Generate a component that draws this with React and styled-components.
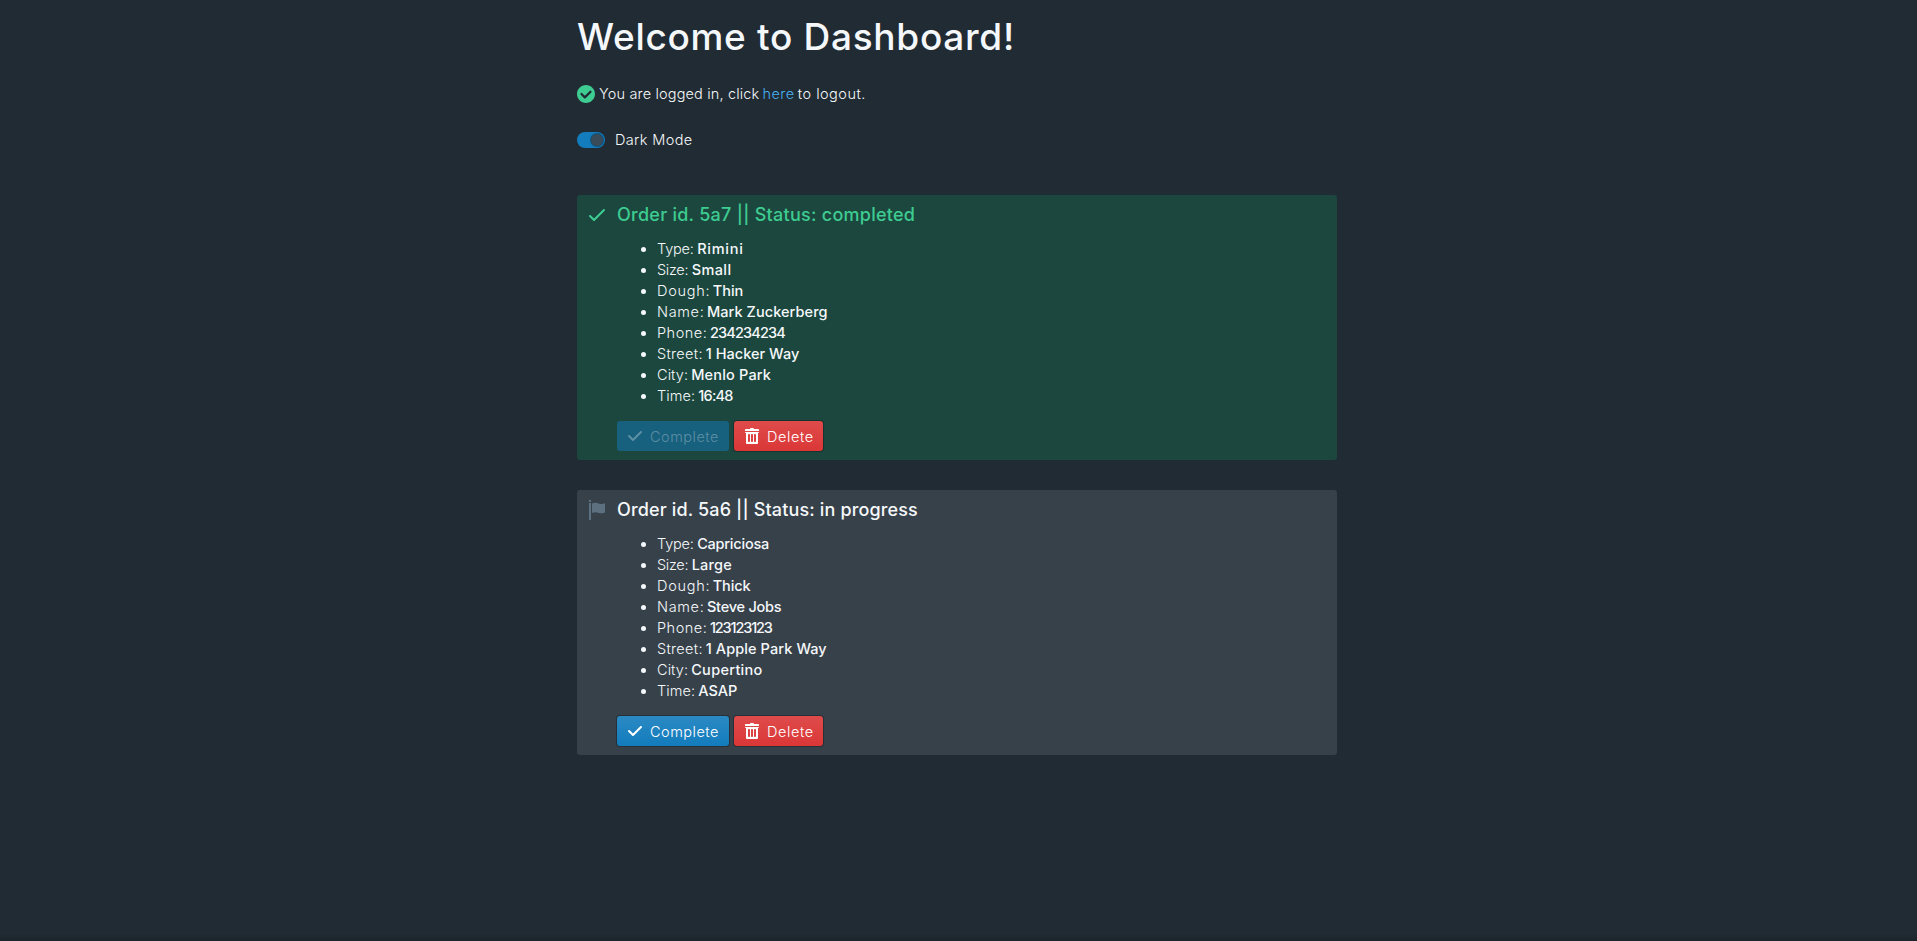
import React, { useState } from "react";
import styled, { createGlobalStyle, css } from "styled-components";

const GlobalStyle = createGlobalStyle`
  * { box-sizing: border-box; }
  body {
    margin: 0;
    background: #212b33;
    color: #f5f8fa;
    font-family: Inter, "Liberation Sans", sans-serif;
    font-size: 14.5px;
    font-weight: 300;
    line-height: 21px;
  }
`;

const Page = styled.div`
  display: flex;
  justify-content: center;
  min-height: 941px;
  padding: 17px 3px 0 0;
  background: linear-gradient(to top, rgba(0, 0, 0, 0.15), transparent 8px);
`;

const Content = styled.main`
  width: 760px;
`;

const Title = styled.h1`
  margin: 0 0 25px;
  font-size: 37px;
  line-height: 40px;
  font-weight: 500;
  letter-spacing: 0.7px;
`;

const Tracked = styled.span`
  letter-spacing: ${(p) => p.$track || 0}px;
`;

const LoginStatus = styled.p`
  display: flex;
  align-items: center;
  margin: 0 0 26px;
  height: 22px;
  white-space: pre;
`;

const StatusIcon = styled.svg`
  width: 18px;
  height: 18px;
  margin: 1px 4px 0 0;
  fill: #3dcc91;
`;

const LogoutLink = styled.a`
  color: #48aff0;
  text-decoration: none;
  letter-spacing: 0.5px;
  margin: 0 3px 0 3px;
`;

const SwitchLabel = styled.label`
  display: flex;
  align-items: center;
  gap: 10px;
  height: 20px;
  margin-bottom: 45px;
  cursor: pointer;
`;

const SwitchText = styled(Tracked)`
  padding-bottom: 1px;
`;

const SwitchTrack = styled.span`
  display: flex;
  justify-content: ${(p) => (p.$on ? "flex-end" : "flex-start")};
  width: 28px;
  height: 16px;
  padding: 2px;
  border-radius: 8px;
  background: ${(p) => (p.$on ? "#137cbd" : "#10161a80")};
`;

const SwitchKnob = styled.span`
  width: 12px;
  height: 12px;
  border-radius: 50%;
  background: #394b59;
  box-shadow: 0 0 0 1px rgba(16, 22, 26, 0.4);
`;

const HiddenInput = styled.input`
  display: none;
`;

const Callout = styled.section`
  display: flex;
  gap: 10px;
  height: 265px;
  margin-bottom: 30px;
  padding: 10px 12px 9px 10px;
  border-radius: 3px;
  background: ${(p) => (p.$done ? "#1c473e" : "#37414a")};
`;

const CalloutIcon = styled.svg`
  flex: none;
  width: 20px;
  height: 20px;
  fill: ${(p) => (p.$done ? "#3dcc91" : "#5c7080")};
`;

const CalloutTitle = styled.h4`
  margin: 0 0 13px;
  font-size: 18px;
  line-height: 20px;
  font-weight: 500;
  letter-spacing: ${(p) => p.$track}px;
  color: ${(p) => (p.$done ? "#3dcc91" : "#f5f8fa")};
`;

const Details = styled.ul`
  margin: 0 0 15px;
  padding-left: 40px;
`;

const Label = styled(Tracked)`
  margin-right: ${(p) => -0.9 - p.$track}px;
`;

const Value = styled.strong`
  font-weight: 500;
  letter-spacing: ${(p) => p.$track}px;
`;

const Actions = styled.div`
  display: flex;
  gap: 5px;
`;

const intents = {
  primary: css`
    background: #137cbd linear-gradient(to bottom, rgba(255, 255, 255, 0.1), rgba(255, 255, 255, 0));
  `,
  danger: css`
    background: #db3737 linear-gradient(to bottom, rgba(255, 255, 255, 0.1), rgba(255, 255, 255, 0));
  `,
};

const Button = styled.button`
  display: flex;
  align-items: center;
  gap: 7px;
  height: 30px;
  width: ${(p) => p.$width}px;
  padding: 0 10px;
  border: 0;
  border-radius: 3px;
  color: #fff;
  font: inherit;
  letter-spacing: ${(p) => p.$track}px;
  box-shadow: 0 0 0 1px rgba(16, 22, 26, 0.4);
  ${(p) => intents[p.$intent]}
  &:disabled {
    background: #17607e;
    box-shadow: none;
    color: rgba(255, 255, 255, 0.3);
  }
`;

const ButtonIcon = styled.svg`
  flex: none;
  width: 16px;
  height: 16px;
  fill: currentColor;
`;

const orders = [
  {
    id: "5a7",
    status: "completed",
    track: 0.26,
    rows: [
      ["Type:", -0.17, "Rimini", 0.75],
      ["Size:", -0.3, "Small", 0.4],
      ["Dough:", 0.72, "Thin", 0],
      ["Name:", 0.66, "Mark Zuckerberg", 0.07],
      ["Phone:", 0.5, "234234234", -0.84],
      ["Street:", 0.3, "1 Hacker Way", 0.04],
      ["City:", 0.07, "Menlo Park", 0.18],
      ["Time:", 0.1, "16:48", -0.8],
    ],
  },
  {
    id: "5a6",
    status: "in progress",
    track: 0.14,
    rows: [
      ["Type:", -0.17, "Capriciosa", -0.22],
      ["Size:", -0.3, "Large", 0.2],
      ["Dough:", 0.72, "Thick", -0.1],
      ["Name:", 0.66, "Steve Jobs", -0.23],
      ["Phone:", 0.5, "123123123", -1.15],
      ["Street:", 0.3, "1 Apple Park Way", 0.1],
      ["City:", 0.07, "Cupertino", 0.3],
      ["Time:", 0.1, "ASAP", -0.05],
    ],
  },
];

function Order({ order }) {
  const done = order.status === "completed";
  return (
    <Callout $done={done}>
      <CalloutIcon viewBox="0 0 20 20" $done={done}>
        {done ? (
          <path d="M17 4c-.28 0-.53.11-.71.29L7 13.59 3.71 10.29A.997.997 0 003 10a1.003 1.003 0 00-.71 1.71l4 4c.18.18.43.29.71.29s.53-.11.71-.29l10-10A1.003 1.003 0 0017 4z" />
        ) : (
          <path d="M2 0h2v2H2zM2 3h2v17H2zM5 3.5c3-1.3 5-.4 7.3.2 2 .5 3.7.4 5.7-.4v9.2c-2 .9-4 .9-6 .4-2.3-.6-4.3-1.3-7 0z" />
        )}
      </CalloutIcon>
      <div>
        <CalloutTitle $done={done} $track={order.track}>
          Order id. {order.id} || Status: {order.status}
        </CalloutTitle>
        <Details>
          {order.rows.map(([label, labelTrack, value, valueTrack]) => (
            <li key={label}>
              <Label $track={labelTrack}>{label}</Label> <Value $track={valueTrack}>{value}</Value>
            </li>
          ))}
        </Details>
        <Actions>
          <Button $intent="primary" $width={112} $track={0.5} disabled={done}>
            <ButtonIcon viewBox="0 0 16 16">
              <path d="M14 3c-.28 0-.53.11-.71.29L6 10.59l-3.29-3.3a1.003 1.003 0 00-1.42 1.42l4 4c.18.18.43.29.71.29s.53-.11.71-.29l8-8A1.003 1.003 0 0014 3z" />
            </ButtonIcon>
            Complete
          </Button>
          <Button $intent="danger" $width={89} $track={0.6}>
            <ButtonIcon viewBox="0 0 16 16">
              <path d="M14.49 3.99h-13c-.28 0-.5.22-.5.5s.22.5.5.5h.5v10c0 .55.45 1 1 1h10c.55 0 1-.45 1-1v-10h.5c.28 0 .5-.22.5-.5s-.22-.5-.5-.5zm-8.5 9c0 .55-.45 1-1 1s-1-.45-1-1v-6c0-.55.45-1 1-1s1 .45 1 1v6zm3 0c0 .55-.45 1-1 1s-1-.45-1-1v-6c0-.55.45-1 1-1s1 .45 1 1v6zm3 0c0 .55-.45 1-1 1s-1-.45-1-1v-6c0-.55.45-1 1-1s1 .45 1 1v6zm2-12h-4c0-.55-.45-1-1-1h-2c-.55 0-1 .45-1 1h-4c-.55 0-1 .45-1 1v1h14v-1c0-.55-.45-1-1-1z" />
            </ButtonIcon>
            Delete
          </Button>
        </Actions>
      </div>
    </Callout>
  );
}

export default function App() {
  const [dark, setDark] = useState(true);
  return (
    <Page>
      <GlobalStyle />
      <Content>
        <Title>Welcome to Dashboard!</Title>
        <LoginStatus>
          <StatusIcon viewBox="0 0 16 16">
            <path d="M8 0C3.58 0 0 3.58 0 8s3.58 8 8 8 8-3.58 8-8-3.58-8-8-8zm4.71 6.71l-5 5c-.18.18-.43.29-.71.29s-.53-.11-.71-.29l-3-3a1.003 1.003 0 011.42-1.42L7 9.59l4.29-4.29a1.003 1.003 0 011.42 1.42z" />
          </StatusIcon>
          <Tracked $track={0.16}>You are logged in, click</Tracked>
          <LogoutLink>here</LogoutLink>
          <Tracked $track={0.5}>to logout.</Tracked>
        </LoginStatus>
        <SwitchLabel>
          <HiddenInput type="checkbox" checked={dark} onChange={() => setDark(!dark)} />
          <SwitchTrack $on={dark}>
            <SwitchKnob />
          </SwitchTrack>
          <SwitchText $track={0.36}>Dark Mode</SwitchText>
        </SwitchLabel>
        {orders.map((order) => (
          <Order key={order.id} order={order} />
        ))}
      </Content>
    </Page>
  );
}
